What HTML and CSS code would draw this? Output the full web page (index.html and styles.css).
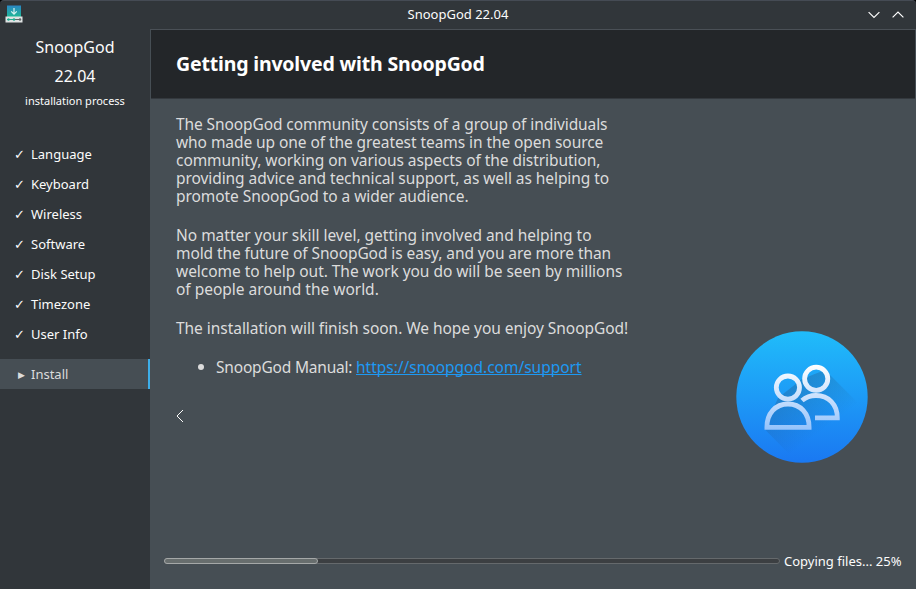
FILE: index.html
```html
<!DOCTYPE html>
<html lang="en">
<head>
<meta charset="utf-8">
<title>SnoopGod 22.04</title>
<link rel="stylesheet" href="styles.css">
</head>
<body>
<div class="window">
  <header class="titlebar">
    <svg class="app-icon" width="18" height="18" viewBox="0 0 18 18">
      <defs><linearGradient id="app" x1="0" y1="0" x2="0" y2="1"><stop offset="0" stop-color="#2a86c4"/><stop offset="1" stop-color="#1dbb94"/></linearGradient></defs>
      <rect x="2" y="0.5" width="14" height="12" fill="url(#app)"/>
      <path d="M9 3v6M6.2 6.4 9 9.1l2.8-2.7" fill="none" stroke="#d8f4f2" stroke-width="1.2"/>
      <rect x="0.5" y="11.5" width="17" height="6" fill="#dfe3e3"/>
      <path d="M2 14.5h7" stroke="#1fae93" stroke-width="1"/>
      <path d="M9 14.5h7" stroke="#5d6668" stroke-width="1"/>
      <circle cx="3.5" cy="14.5" r="1.2" fill="#1fae93"/><circle cx="9" cy="14.5" r="1.3" fill="#1fae93"/><circle cx="15" cy="14.5" r="1.2" fill="#5d6668"/>
    </svg>
    <h1 class="window-title">SnoopGod 22.04</h1>
    <div class="controls">
      <svg width="12" height="8" viewBox="0 0 12 8"><path d="M.6 1.1 6 6.4l5.4-5.3"/></svg>
      <svg width="12" height="8" viewBox="0 0 12 8"><path d="M.6 6.4 6 1.1l5.4 5.3"/></svg>
    </div>
  </header>
  <div class="body">
    <aside class="sidebar">
      <div class="product">SnoopGod<br>22.04</div>
      <div class="subtitle">installation process</div>
      <ul class="steps">
        <li><span class="mark">✓</span>Language</li>
        <li><span class="mark">✓</span>Keyboard</li>
        <li><span class="mark">✓</span>Wireless</li>
        <li><span class="mark">✓</span>Software</li>
        <li><span class="mark">✓</span>Disk Setup</li>
        <li><span class="mark">✓</span>Timezone</li>
        <li><span class="mark">✓</span>User Info</li>
        <li class="current"><span class="mark arrow">▶</span>Install</li>
      </ul>
    </aside>
    <main class="content">
      <div class="banner"><h2>Getting involved with SnoopGod</h2></div>
      <div class="slide">
        <div class="copy">
          <p><span class="l1">The SnoopGod community consists of a group of individuals</span><span class="l2">who made up one of the greatest teams in the open source</span><span class="l3">community, working on various aspects of the distribution,</span><span class="l4">providing advice and technical support, as well as helping to</span><span class="l5">promote SnoopGod to a wider audience.</span></p>
          <p><span class="l6">No matter your skill level, getting involved and helping to</span><span class="l7">mold the future of SnoopGod is easy, and you are more than</span><span class="l8">welcome to help out. The work you do will be seen by millions</span><span class="l9">of people around the world.</span></p>
          <p><span class="l10">The installation will finish soon. We hope you enjoy SnoopGod!</span></p>
          <div class="links"><i class="bullet"></i><span class="label">SnoopGod Manual:</span><a class="link" href="#">https://snoopgod.com/support</a></div>
          <svg class="back" width="8" height="14" viewBox="0 0 8 14"><path d="M7 1 1 7l6 6"/></svg>
        </div>
        <svg class="people" width="132" height="132" viewBox="0 0 132 132">
          <defs>
            <linearGradient id="disc" x1="0" y1="0" x2="0" y2="1"><stop offset="0" stop-color="#20bcfa"/><stop offset="1" stop-color="#1a78f2"/></linearGradient>
            <linearGradient id="ink" gradientUnits="userSpaceOnUse" x1="0" y1="34" x2="0" y2="99"><stop offset="0" stop-color="#fff"/><stop offset="1" stop-color="#94c2fb"/></linearGradient>
            <linearGradient id="shade" gradientUnits="userSpaceOnUse" x1="58" y1="58" x2="88" y2="98"><stop offset="0" stop-color="#24507c" stop-opacity=".3"/><stop offset="1" stop-color="#24507c" stop-opacity="0"/></linearGradient>
            <clipPath id="clip"><circle cx="66" cy="66" r="65.7"/></clipPath>
          </defs>
          <circle cx="66" cy="66" r="65.7" fill="url(#disc)"/>
          <path clip-path="url(#clip)" d="M28.500 98 70 140 140 90 89 39 66 48 42 67Z" fill="url(#shade)"/>
          <g fill="none" stroke="url(#ink)" stroke-width="4.8">
            <circle cx="51.9" cy="56.6" r="11.6"/>
            <circle cx="80.2" cy="47.8" r="11.6"/>
            <path d="M30.9 96.3C30.9 82.4 39.5 73 52 73S73.100 82.400 73.100 96.300Z"/>
            <path d="M66 69.500C70 66 74.500 64.500 80 64.500 92.500 64.500 101.300 73.500 101.300 86.900H79"/>
          </g>
        </svg>
      </div>
      <footer class="status">
        <div class="track"><div class="fill" style="width:25%"></div></div>
        <span class="status-text">Copying files... 25%</span>
      </footer>
    </main>
  </div>
</div>
</body>
</html>
```

FILE: styles.css
```css
* { box-sizing: border-box; }
body { margin: 0; background: #000; font-family: "Noto Sans", "DejaVu Sans", sans-serif; font-size: 13px; color: #fcfcfc; }
.window { width: 916px; height: 589px; background: #31363a; border-top: 1px solid #454b54; border-radius: 4px 4px 0 0; overflow: hidden; display: flex; flex-direction: column; }
.titlebar { height: 28px; display: grid; grid-template-columns: 1fr auto 1fr; align-items: center; padding: 0 12px; flex: none; }
.window-title { margin: -2px 0 0; font-size: 13px; font-weight: 400; line-height: 18px; }
.app-icon { margin: -2px 0 0 -7px; }
.controls { display: flex; gap: 12px; justify-content: flex-end; }
.controls path, .back path { fill: none; stroke: #fcfcfc; stroke-width: 1.2; }
.back path { stroke-width: 1; }
.body { flex: 1; display: flex; min-height: 0; }
.sidebar { width: 150px; flex: none; padding-top: 4px; }
.product { font-size: 16px; line-height: 29px; text-align: center; }
.subtitle { font-size: 11px; line-height: 18px; text-align: center; margin-top: 1px; }
.steps { list-style: none; margin: 29px 0 0; padding: 0; }
.steps li { height: 30px; line-height: 30px; display: flex; }
.mark { width: 31px; padding: 1px 0 0 14px; font-family: "DejaVu Sans", sans-serif; font-size: 13px; }
.mark.arrow { padding-left: 18px; font-size: 9px; }
.steps .current { margin-top: 10px; background: #464e54; border-right: 2px solid #3daee9; color: #dcdcdc; }
.content { flex: 1; background: #464e54; display: flex; flex-direction: column; border-top: 1px solid #4a5056; min-width: 0; }
.banner { height: 69px; background: #232629; margin: 0 1px; border-bottom: 1px solid #34393e; padding: 21px 25px; }
h2 { margin: 0; font-size: 19.5px; line-height: 26px; font-weight: 700; letter-spacing: -.17px; color: #fff; white-space: nowrap; }
.slide { flex: 1; display: flex; justify-content: space-between; padding: 16px 48px 0 26px; }
.copy { font-size: 15.5px; line-height: 18px; color: #dcdcdc; }
.copy p { margin: 0 0 21px; }
.copy p span { display: block; width: max-content; height: 18px; white-space: pre; }
.l1 { letter-spacing: -.097px; }
.l2, .l4 { letter-spacing: -.07px; }
.l3, .l5 { letter-spacing: -.065px; }
.l6, .l9 { letter-spacing: -.015px; }
.l7 { letter-spacing: -.085px; }
.l8, .l10 { letter-spacing: -.04px; }
.links { display: flex; align-items: center; height: 18px; }
.bullet { width: 6px; height: 6px; border-radius: 50%; background: #dcdcdc; margin: 0 12px 0 22px; }
.label { width: 140px; letter-spacing: -.19px; white-space: nowrap; }
.link { color: #1d99f3; letter-spacing: -.01px; text-decoration: underline; text-decoration-thickness: 1px; text-underline-offset: 1px; text-decoration-skip-ink: none; }
.back { display: block; margin-top: 33px; }
.people { margin-top: 216px; flex: none; }
.status { height: 56px; flex: none; display: flex; padding: 19px 14px 0; gap: 4px; line-height: 18px; }
.status-text { flex: none; white-space: nowrap; }
.track { flex: 0 0 616px; height: 6px; margin-top: 6px; border: 1px solid #65696c; border-radius: 3px; background: #3c3f42; display: flex; }
.fill { margin: -1px; border: 1px solid #a5a8a8; border-radius: 3px; background: #686e6e; }
```
